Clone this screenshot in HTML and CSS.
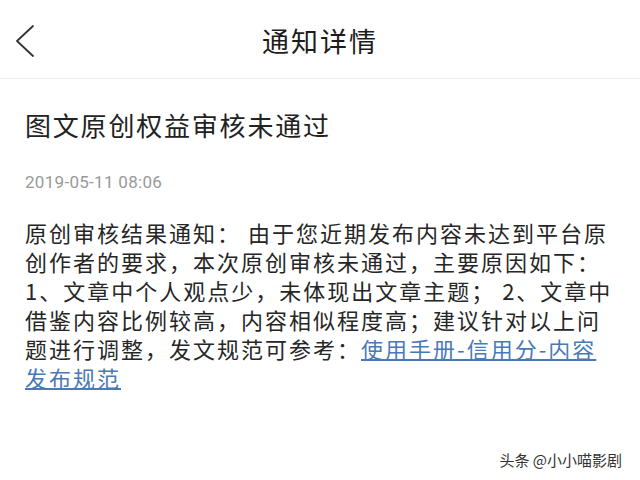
FILE: index.html
```html
<!DOCTYPE html>
<html lang="zh-CN">
<head>
<meta charset="utf-8">
<title>通知详情</title>
<link rel="stylesheet" href="styles.css">
</head>
<body>
<div class="page">
  <header class="topbar">
    <div class="back">
      <svg width="20" height="34" viewBox="0 0 20 34" aria-hidden="true">
        <polyline points="17,1 1,16 17,31" fill="none" stroke="#333" stroke-width="1.8" stroke-linecap="round" stroke-linejoin="round"/>
      </svg>
    </div>
    <h1 class="topbar-title">通知详情</h1>
    <div class="spacer"></div>
  </header>
  <main class="content">
    <h2 class="notice-title">图文原创权益审核未通过</h2>
    <div class="notice-date">2019-05-11 08:06</div>
    <p class="notice-body">原创审核结果通知： 由于您近期发布内容未达到平台原创作者的要求，本次原创审核未通过，主要原因如下：<br>1、文章中个人观点少，未体现出文章主题； 2、文章中借鉴内容比例较高，内容相似程度高；建议针对以上问题进行调整，发文规范可参考：<a class="link" href="#">使用手册-信用分-内容发布规范</a></p>
  </main>
  <div class="watermark">头条 @小小喵影剧</div>
</div>
</body>
</html>
```
FILE: styles.css
```css
html, body {
  margin: 0;
  padding: 0;
  background: #ffffff;
}

.page {
  position: relative;
  width: 640px;
  height: 480px;
  overflow: hidden;
  font-family: "Noto Sans CJK SC", "Noto Sans", sans-serif;
  color: #222222;
}

.topbar {
  height: 74px;
  padding-top: 4px;
  display: grid;
  grid-template-columns: 1fr auto 1fr;
  align-items: center;
  border-bottom: 1px solid #f0f0f0;
}

.back {
  padding-left: 16px;
  padding-top: 1px;
  display: flex;
  align-items: center;
}

.back svg {
  display: block;
}

.topbar-title {
  margin: 0;
  font-size: 27px;
  font-weight: 400;
  letter-spacing: 2px;
  line-height: 36px;
  color: #1c1c1c;
}

.content {
  padding: 0 27px 0 25px;
}

.notice-title {
  margin: 28px 0 0;
  font-size: 26px;
  font-weight: 400;
  letter-spacing: 1.8px;
  line-height: 36px;
  color: #222222;
}

.notice-date {
  margin-top: 27px;
  font-family: Roboto, "Noto Sans", sans-serif;
  font-size: 17px;
  letter-spacing: 0.3px;
  line-height: 24px;
  color: #999999;
}

.notice-body {
  margin: 24px 0 0;
  font-size: 22px;
  letter-spacing: 2px;
  line-height: 29px;
  color: #262626;
}

.link {
  color: #4a7ab5;
  text-decoration: underline;
  text-underline-offset: 1px;
}

.watermark {
  position: absolute;
  right: 18px;
  bottom: 10px;
  font-size: 15px;
  line-height: 20px;
  color: #333333;
  text-shadow: 0 0 2px #ffffff, 1px 1px 0 #ffffff;
}
```
